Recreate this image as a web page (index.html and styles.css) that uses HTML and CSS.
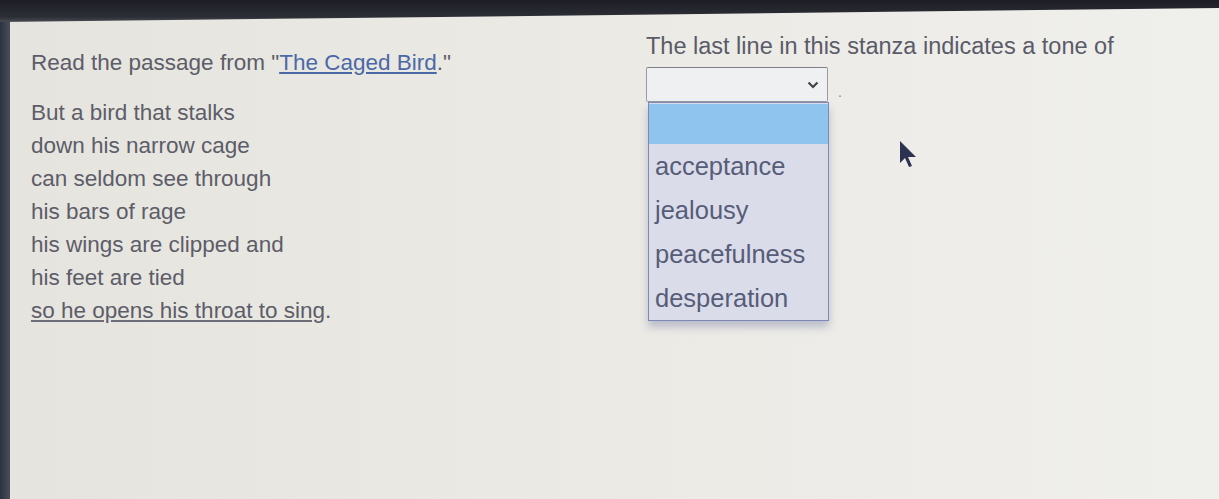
FILE: index.html
```html
<!DOCTYPE html>
<html lang="en">
<head>
  <meta charset="UTF-8" />
  <title>The Caged Bird</title>
  <link rel="stylesheet" href="styles.css">
</head>
<body>

<div class="topbar"></div>

<div class="screen">
  <div class="edge"></div>

  <main class="main">
    <section class="passage">
      <p class="intro">Read the passage from "<a href="#">The Caged Bird</a>."</p>
      <div class="poem">
        <p>But a bird that stalks</p>
        <p>down his narrow cage</p>
        <p>can seldom see through</p>
        <p>his bars of rage</p>
        <p>his wings are clipped and</p>
        <p>his feet are tied</p>
        <p><u>so he opens his throat to sing</u>.</p>
      </div>
    </section>

    <section class="question">
      <p class="prompt">The last line in this stanza indicates a tone of</p>
      <div class="answer">
        <div class="select-wrap">
          <div class="select">
            <svg class="chevron" width="12" height="8" viewBox="0 0 12 8">
              <path d="M1.5 1.5 L6 6 L10.5 1.5" fill="none" stroke="#444" stroke-width="2.2"/>
            </svg>
          </div>
          <ul class="options">
            <li class="selected"></li>
            <li>acceptance</li>
            <li>jealousy</li>
            <li>peacefulness</li>
            <li>desperation</li>
          </ul>
        </div>
        <span class="dot">.</span>
      </div>

      <!-- mouse pointer -->
      <svg class="pointer" width="22" height="30" viewBox="0 0 22 30">
        <path d="M2 2 L2 24 L7 19 L11 28 L14 27 L10 18 L18 18 Z" fill="#2c3252"/>
      </svg>
    </section>
  </main>
</div>

</body>
</html>
```

FILE: styles.css
```css
* {
  box-sizing: border-box;
  margin: 0;
  padding: 0;
}
body {
  font-family: 'Liberation Sans', Arial, sans-serif;
  background: #e9e8e3;
  color: #5c5d69;
  width: 1219px;
  height: 499px;
  overflow: hidden;
  position: relative;
}
/* dark bezel along the top, thicker on the left */
.topbar {
  position: absolute;
  top: 0;
  left: 0;
  width: 100%;
  height: 24px;
  background: linear-gradient(to bottom, #1d1e24 0%, #2c2e36 70%, #54565e 100%);
  clip-path: polygon(0 0, 100% 0, 100% 8px, 0 22px);
}
.screen {
  display: flex;
  height: 499px;
}
.edge {
  width: 10px;
  background: linear-gradient(to right, #2e3140, #4a4d5a);
}
.main {
  flex: 1;
  display: flex;
  padding-left: 21px;
  background: linear-gradient(to right, #e6e4de 0%, #eceae5 50%, #efefec 100%);
}
.passage {
  width: 615px;
  padding-top: 46px;
  font-size: 22.5px;
  line-height: 33px;
}
.intro {
  margin-bottom: 17px;
}
.intro a {
  color: #4b69a6;
  text-decoration: underline;
}
.poem u {
  text-decoration-color: #6c6d78;
}
.question {
  position: relative;
  flex: 1;
  padding-top: 30px;
  font-size: 23.5px;
  line-height: 33px;
}
.prompt {
  color: #5a5b68;
}
.answer {
  display: flex;
  align-items: flex-end;
  margin-top: 4px;
}
.select-wrap {
  position: relative;
}
.select {
  width: 182px;
  height: 35px;
  border: 1px solid #9a9ca3;
  border-top-color: #7f8189;
  border-radius: 2px;
  background: #eff0f2;
  display: flex;
  align-items: center;
  justify-content: flex-end;
  padding-right: 8px;
}
.dot {
  margin-left: 10px;
  font-size: 14px;
  line-height: 20px;
  color: #8a8b94;
}
.options {
  position: absolute;
  top: 35px;
  left: 2px;
  width: 181px;
  list-style: none;
  background: #dadcea;
  border: 1px solid #7d89b4;
  padding-top: 1px;
  box-shadow: 0 6px 8px rgba(90, 100, 150, 0.35);
  font-size: 25.5px;
  color: #575c78;
}
.options li {
  height: 44px;
  line-height: 44px;
  padding-left: 6px;
}
.options li.selected {
  height: 40px;
  background: #8fc4ef;
}
.pointer {
  position: absolute;
  left: 252px;
  top: 139px;
}
```
